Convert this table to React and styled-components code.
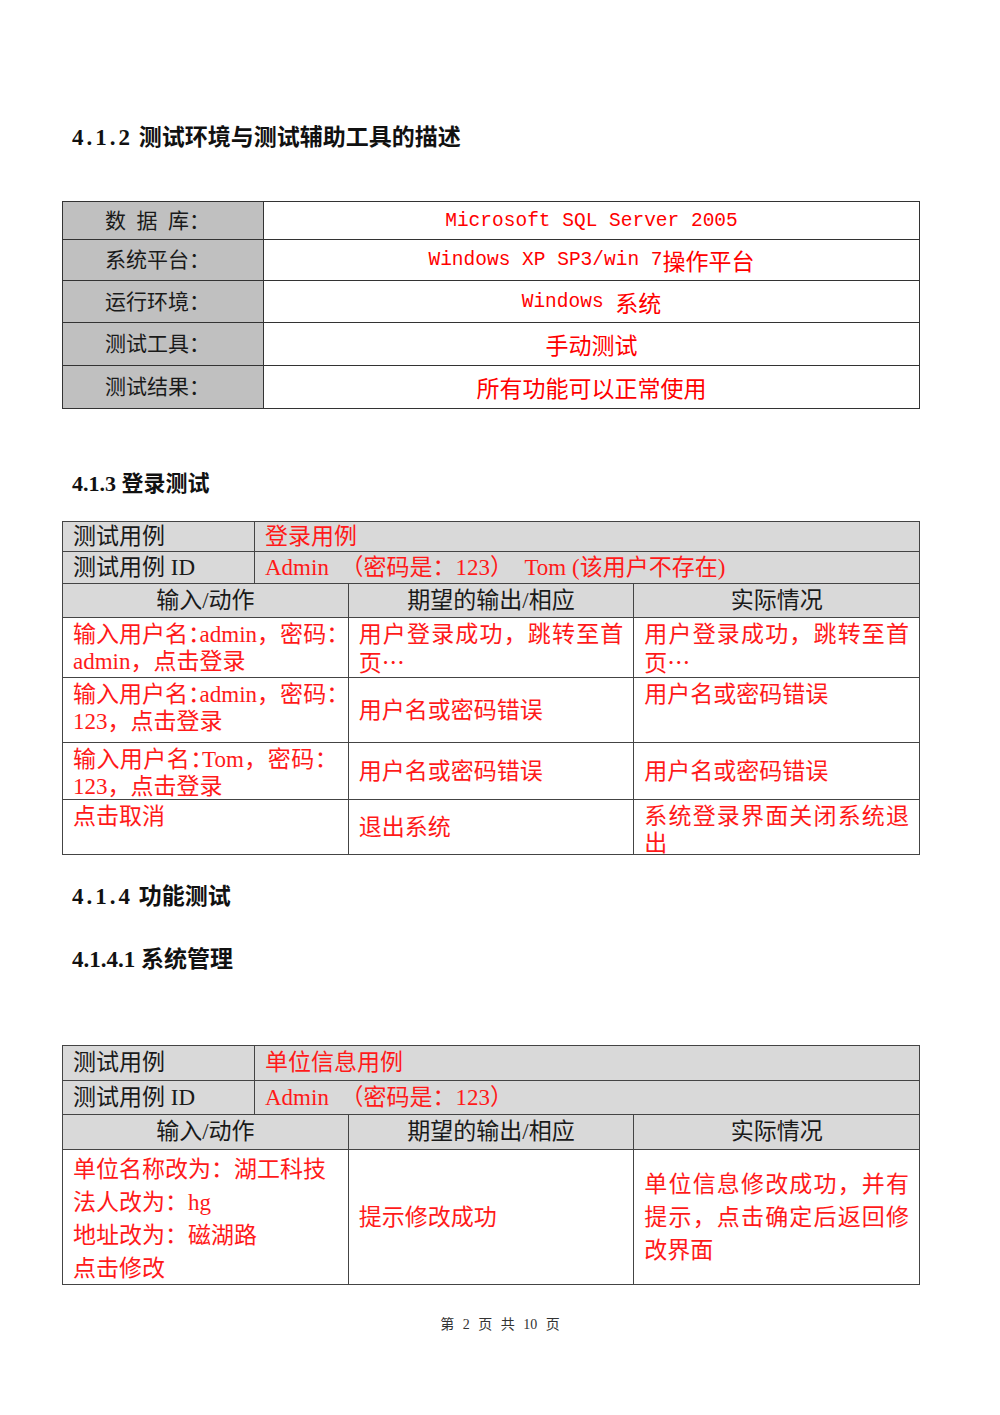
import React from 'react';
import styled, { createGlobalStyle } from 'styled-components';

const GlobalStyle = createGlobalStyle`
  html, body {
    margin: 0;
    padding: 0;
    background: #ffffff;
  }
  body {
    font-family: "Liberation Serif", "Noto Sans CJK SC", serif;
    color: #1a1a1a;
  }
`;

const envRows = [
  { label: '数\u2002据\u2002库：', value: [['m', 'Microsoft SQL Server 2005']] },
  { label: '系统平台：', value: [['m', 'Windows XP SP3/win 7'], ['c', '操作平台']] },
  { label: '运行环境：', value: [['m', 'Windows '], ['c', '系统']] },
  { label: '测试工具：', value: [['c', '手动测试']] },
  { label: '测试结果：', value: [['c', '所有功能可以正常使用']] },
];

const Half = styled.span`
  font-feature-settings: "halt";
`;

const Cjk = styled.span`
  font-family: "Noto Sans CJK SC", sans-serif;
`;

const loginRows = [
  {
    h: 60,
    cells: [
      { v: 'top', lines: [{ t: <>输入用户名<Half>：</Half>admin，密码<Half>：</Half></>, j: true }, { t: 'admin，点击登录' }] },
      { v: 'top', lines: [{ t: '用户登录成功，跳转至首', j: true }, { t: <>页<Cjk>…</Cjk></> }] },
      { v: 'top', lines: [{ t: '用户登录成功，跳转至首', j: true }, { t: <>页<Cjk>…</Cjk></> }] },
    ],
  },
  {
    h: 65,
    cells: [
      { v: 'top', lines: [{ t: <>输入用户名<Half>：</Half>admin，密码<Half>：</Half></>, j: true }, { t: '123，点击登录' }] },
      { v: 'center', lines: [{ t: '用户名或密码错误' }] },
      { v: 'top', lines: [{ t: '用户名或密码错误' }] },
    ],
  },
  {
    h: 57,
    cells: [
      { v: 'top', lines: [{ t: <>输入用户名<Half>：</Half>Tom，密码：</>, j: true }, { t: '123，点击登录' }] },
      { v: 'center', lines: [{ t: '用户名或密码错误' }] },
      { v: 'center', lines: [{ t: '用户名或密码错误' }] },
    ],
  },
  {
    h: 55,
    cells: [
      { v: 'top', lines: [{ t: '点击取消' }] },
      { v: 'center', lines: [{ t: '退出系统' }] },
      { v: 'top', lines: [{ t: '系统登录界面关闭系统退', j: true }, { t: '出' }] },
    ],
  },
];

const unitRows = [
  {
    h: 135,
    cells: [
      { v: 'top', lines: [{ t: '单位名称改为：湖工科技' }, { t: '法人改为：hg' }, { t: '地址改为：磁湖路' }, { t: '点击修改' }] },
      { v: 'center', lines: [{ t: '提示修改成功' }] },
      { v: 'center', lines: [{ t: '单位信息修改成功，并有', j: true }, { t: '提示，点击确定后返回修', j: true }, { t: '改界面' }] },
    ],
  },
];

const CaseTable = ({ name, id, rows, metaH, headH, lh }) => (
  <Grid>
    <MetaRow $h={metaH[0]}>
      <MetaCell>测试用例</MetaCell>
      <MetaCell $red>{name}</MetaCell>
    </MetaRow>
    <MetaRow $h={metaH[1]}>
      <MetaCell>测试用例 ID</MetaCell>
      <MetaCell $red>{id}</MetaCell>
    </MetaRow>
    <ColRow $h={headH} $head>
      <HeadCell>输入/动作</HeadCell>
      <HeadCell>期望的输出/相应</HeadCell>
      <HeadCell>实际情况</HeadCell>
    </ColRow>
    {rows.map((row, i) => (
      <ColRow key={i} $h={row.h}>
        {row.cells.map((cell, k) => (
          <DataCell key={k} $v={cell.v} $lh={lh}>
            {cell.lines.map((ln, n) => (
              <Line key={n} $justify={ln.j}>
                {ln.t}
              </Line>
            ))}
          </DataCell>
        ))}
      </ColRow>
    ))}
  </Grid>
);

const App = () => (
  <>
    <GlobalStyle />
    <Page>
      <Heading $mt={0} $size={23}>
        <Num>4.1.2</Num> 测试环境与测试辅助工具的描述
      </Heading>

      <EnvTable>
        {envRows.map((r, i) => (
          <React.Fragment key={i}>
            <EnvLabel>{r.label}</EnvLabel>
            <EnvValue>
              {r.value.map(([kind, text], k) =>
                kind === 'm' ? <Mono key={k}>{text}</Mono> : <span key={k}>{text}</span>
              )}
            </EnvValue>
          </React.Fragment>
        ))}
      </EnvTable>

      <Heading $mt={60} $size={22}>4.1.3 登录测试</Heading>

      <TableGap $h={22} />
      <CaseTable
        name="登录用例"
        id="Admin　（密码是：123）  Tom (该用户不存在)"
        rows={loginRows}
        metaH={[30, 32]}
        headH={34}
        lh={27}
      />

      <Heading $mt={27} $size={23}>
        <Num>4.1.4</Num> 功能测试
      </Heading>
      <Heading $mt={33} $size={23}>4.1.4.1 系统管理</Heading>

      <TableGap $h={70} />
      <CaseTable
        name="单位信息用例"
        id="Admin　（密码是：123）"
        rows={unitRows}
        metaH={[35, 34]}
        headH={35}
        lh={33}
      />

      <Footer>第 2 页 共 10 页</Footer>
    </Page>
  </>
);

const Page = styled.div`
  width: 1000px;
  min-height: 1415px;
  box-sizing: border-box;
  padding: 123px 80px 0 62px;
  display: flex;
  flex-direction: column;
`;

const Heading = styled.h2`
  margin: ${(p) => p.$mt}px 0 0 10px;
  height: 30px;
  font-size: ${(p) => p.$size}px;
  line-height: 30px;
  font-weight: bold;
  color: #111;
  white-space: nowrap;
`;

const Num = styled.span`
  font-family: "Liberation Serif", serif;
  letter-spacing: 3px;
`;

const TableGap = styled.div`
  height: ${(p) => p.$h}px;
  flex: none;
`;

const EnvTable = styled.div`
  margin-top: 48px;
  display: grid;
  grid-template-columns: 201px 1fr;
  grid-template-rows: 38px 41px 42px 43px 43px;
  border-top: 1px solid #333;
  border-left: 1px solid #333;
`;

const EnvLabel = styled.div`
  box-sizing: border-box;
  background: #c0c0c0;
  border-right: 1px solid #333;
  border-bottom: 1px solid #333;
  padding: 0 0 4px 42px;
  display: flex;
  align-items: center;
  font-family: "Noto Sans CJK SC", sans-serif;
  font-size: 21px;
  line-height: 26px;
  color: #1a1a1a;
  white-space: nowrap;
`;

const EnvValue = styled.div`
  box-sizing: border-box;
  border-right: 1px solid #333;
  border-bottom: 1px solid #333;
  display: flex;
  align-items: center;
  justify-content: center;
  font-family: "Noto Sans CJK SC", sans-serif;
  font-size: 23px;
  line-height: 26px;
  color: #ff0000;
  white-space: pre;
`;

const Mono = styled.span`
  font-family: "Liberation Mono", "Noto Sans CJK SC", monospace;
  font-size: 19.5px;
`;

const Grid = styled.div`
  display: flex;
  flex-direction: column;
  border-top: 1px solid #444;
  border-left: 1px solid #444;
  font-size: 23px;
  line-height: 26px;
`;

const MetaRow = styled.div`
  display: grid;
  grid-template-columns: 192px 1fr;
  height: ${(p) => p.$h}px;
  background: #d9d9d9;
  overflow: hidden;
`;

const ColRow = styled.div`
  display: grid;
  grid-template-columns: repeat(3, 1fr);
  height: ${(p) => p.$h}px;
  background: ${(p) => (p.$head ? '#d9d9d9' : '#ffffff')};
  overflow: hidden;
`;

const MetaCell = styled.div`
  box-sizing: border-box;
  min-height: 0;
  border-right: 1px solid #444;
  border-bottom: 1px solid #444;
  padding: 0 10px;
  display: flex;
  align-items: center;
  color: ${(p) => (p.$red ? '#ff1a1a' : '#1a1a1a')};
  white-space: pre;
`;

const HeadCell = styled.div`
  box-sizing: border-box;
  min-height: 0;
  border-right: 1px solid #444;
  border-bottom: 1px solid #444;
  display: flex;
  align-items: center;
  justify-content: center;
  color: #1a1a1a;
  white-space: nowrap;
`;

const DataCell = styled.div`
  box-sizing: border-box;
  min-height: 0;
  border-right: 1px solid #444;
  border-bottom: 1px solid #444;
  padding: 0 10px;
  padding-top: ${(p) => (p.$v === 'center' ? 0 : 3)}px;
  display: flex;
  flex-direction: column;
  justify-content: ${(p) => (p.$v === 'center' ? 'center' : 'flex-start')};
  line-height: ${(p) => p.$lh}px;
  color: #ff1a1a;
  overflow: hidden;
`;

const Line = styled.div`
  white-space: nowrap;
  text-align: ${(p) => (p.$justify ? 'justify' : 'left')};
  text-align-last: ${(p) => (p.$justify ? 'justify' : 'auto')};
  text-justify: inter-character;
`;

const Footer = styled.div`
  margin-top: 30px;
  text-align: center;
  font-size: 14px;
  line-height: 20px;
  word-spacing: 5px;
  color: #333;
  padding-left: 18px;
`;

export default App;
